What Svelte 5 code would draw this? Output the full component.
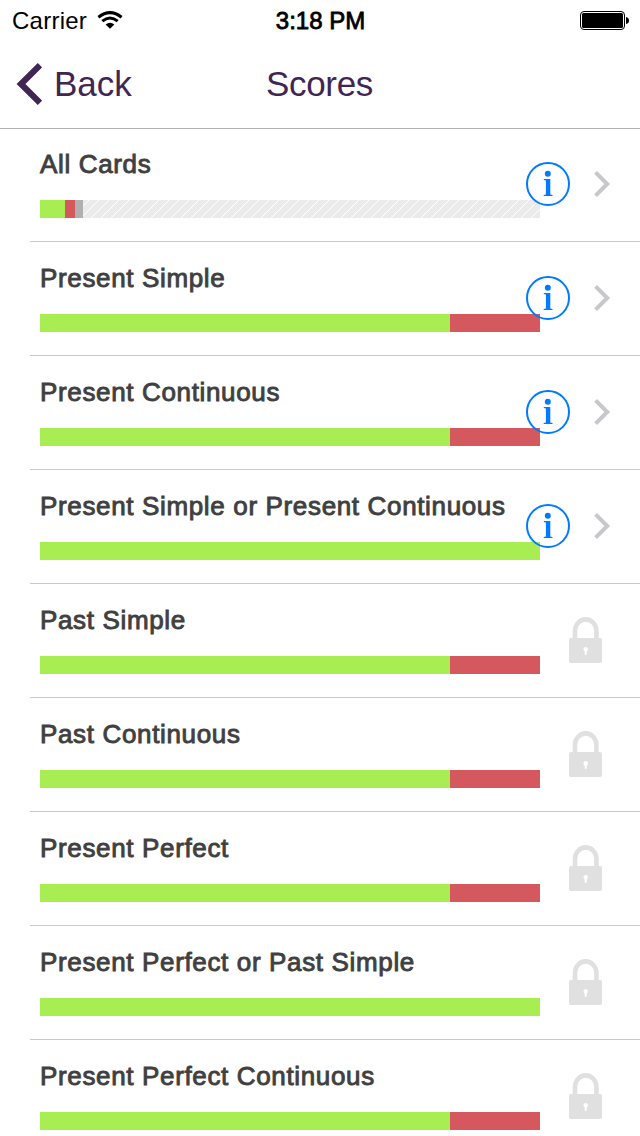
<script>
  const cards = [
    { title: "All Cards", right: 25, wrong: 10, seen: 8 },
    { title: "Present Simple", right: 410, wrong: 90 },
    { title: "Present Continuous", right: 410, wrong: 90 },
    { title: "Present Simple or Present Continuous", right: 500, wrong: 0 },
    { title: "Past Simple", right: 410, wrong: 90, locked: true },
    { title: "Past Continuous", right: 410, wrong: 90, locked: true },
    { title: "Present Perfect", right: 410, wrong: 90, locked: true },
    { title: "Present Perfect or Past Simple", right: 500, wrong: 0, locked: true },
    { title: "Present Perfect Continuous", right: 410, wrong: 90, locked: true },
  ];
</script>

<div class="screen">
  <header>
    <div class="status">
      <div class="carrier">
        <span>Carrier</span>
        <svg width="26" height="18" viewBox="0 0 26 18">
          <g fill="none" stroke="#000" stroke-width="3">
            <path d="M1.4 6.2Q13 -3 24.6 6.2" />
            <path d="M5.3 10.2Q13 3.8 20.7 10.2" />
          </g>
          <path d="M8.6 13.5Q13 10 17.4 13.5L13 17.8Z" />
        </svg>
      </div>
      <span class="time">3:18 PM</span>
      <svg class="battery" width="49" height="20" viewBox="0 0 49 20">
        <rect x="0.5" y="1.5" width="44" height="18" rx="3.5" fill="none" stroke="#000" />
        <rect x="2" y="3" width="41" height="15" rx="1.5" />
        <path d="M46 7Q49 7.5 49 10.5T46 14Z" />
      </svg>
    </div>
    <nav>
      <button class="back">
        <svg width="26" height="42" viewBox="0 0 26 42">
          <path d="M24 2.2L5 21L24 39.8" fill="none" stroke="#412552" stroke-width="6.2" />
        </svg>
        <span>Back</span>
      </button>
      <h1>Scores</h1>
    </nav>
  </header>

  <ul>
    {#each cards as card}
      <li>
        <div class="score">
          <h2>{card.title}</h2>
          <div class="bar">
            <div class="right" style="width: {card.right}px"></div>
            <div class="wrong" style="width: {card.wrong}px"></div>
            {#if card.seen}
              <div class="seen" style="width: {card.seen}px"></div>
            {/if}
          </div>
        </div>
        {#if card.locked}
          <svg class="lock" width="34" height="48" viewBox="0 0 34 48">
            <path d="M6 23V13.8a10.7 11.4 0 0 1 21.4 0V23" fill="none" stroke="#e0e0e0" stroke-width="4.6" />
            <rect x="0" y="21" width="33" height="25" rx="2" fill="#e0e0e0" />
            <path d="M16.7 30a2.4 2.4 0 0 1 1 4.5v3.2h-2v-3.2a2.4 2.4 0 0 1 1-4.5Z" fill="#fff" />
          </svg>
        {:else}
          <div class="actions">
            <svg width="44" height="44" viewBox="0 0 44 44">
              <circle cx="22" cy="22" r="21" fill="none" stroke="#007aff" stroke-width="2" />
              <circle cx="21.8" cy="11.8" r="3" fill="#007aff" />
              <path d="M17.8 17h6.5v15.6l2.2 0.4v1h-8.8v-1l2.2-0.4V18.4l-2.1-0.4Z" fill="#007aff" />
            </svg>
            <svg width="18" height="28" viewBox="0 0 18 28">
              <path d="M2.6 2.4L14.2 14L2.6 25.6" fill="none" stroke="#c7c7cc" stroke-width="4" />
            </svg>
          </div>
        {/if}
      </li>
    {/each}
  </ul>
</div>

<style>
  :global(body) {
    background: #fff;
  }
  .screen {
    width: 640px;
    height: 1136px;
    overflow: hidden;
    background: #fff;
    font-family: "Liberation Sans", Arial, sans-serif;
  }
  header {
    height: 129px;
    box-sizing: border-box;
    border-bottom: 1px solid #b2b2b2;
  }
  .status {
    height: 40px;
    display: grid;
    grid-template-columns: 1fr auto 1fr;
    align-items: center;
    padding: 0 11px 0 12px;
    font-size: 24px;
  }
  .carrier {
    display: flex;
    align-items: center;
    gap: 10px;
    letter-spacing: 0.25px;
  }
  .status span {
    padding-top: 2px;
  }
  .time {
    -webkit-text-stroke: 0.8px #000;
  }
  .battery {
    justify-self: end;
  }
  nav {
    height: 88px;
    display: grid;
    grid-template-columns: 1fr auto 1fr;
    align-items: center;
    padding: 0 17px 0 16px;
    color: #412552;
  }
  .back {
    display: flex;
    align-items: center;
    gap: 12px;
    padding: 0;
    border: 0;
    background: none;
    color: inherit;
    font: inherit;
    font-size: 35px;
  }
  h1 {
    margin: 0;
    font-size: 35px;
    font-weight: 400;
    letter-spacing: -0.3px;
  }
  ul {
    list-style: none;
    margin: -1px 0 0 30px;
    padding: 0;
  }
  li {
    display: flex;
    align-items: center;
    height: 114px;
    box-sizing: border-box;
    padding-left: 10px;
    border-bottom: 1px solid #c8c7cc;
  }
  .score {
    width: 500px;
    height: 113px;
    flex: none;
  }
  h2 {
    margin: 21px 0;
    height: 30px;
    line-height: 30px;
    font-size: 26px;
    font-weight: 400;
    letter-spacing: 0.65px;
    color: #404040;
    -webkit-text-stroke: 0.9px #404040;
    white-space: nowrap;
  }
  .bar {
    display: flex;
    height: 18px;
    background: repeating-linear-gradient(135deg, #ebebeb 0 6px, #fff 6px 7.07px);
  }
  .right {
    background: #a8ed51;
  }
  .wrong {
    background: #d5585e;
  }
  .seen {
    background: #b0b0b0;
  }
  .actions {
    display: flex;
    align-items: center;
    gap: 23px;
    margin-left: -14px;
    padding-bottom: 2px;
    z-index: 1;
  }
  .lock {
    margin-left: 29px;
  }
</style>
